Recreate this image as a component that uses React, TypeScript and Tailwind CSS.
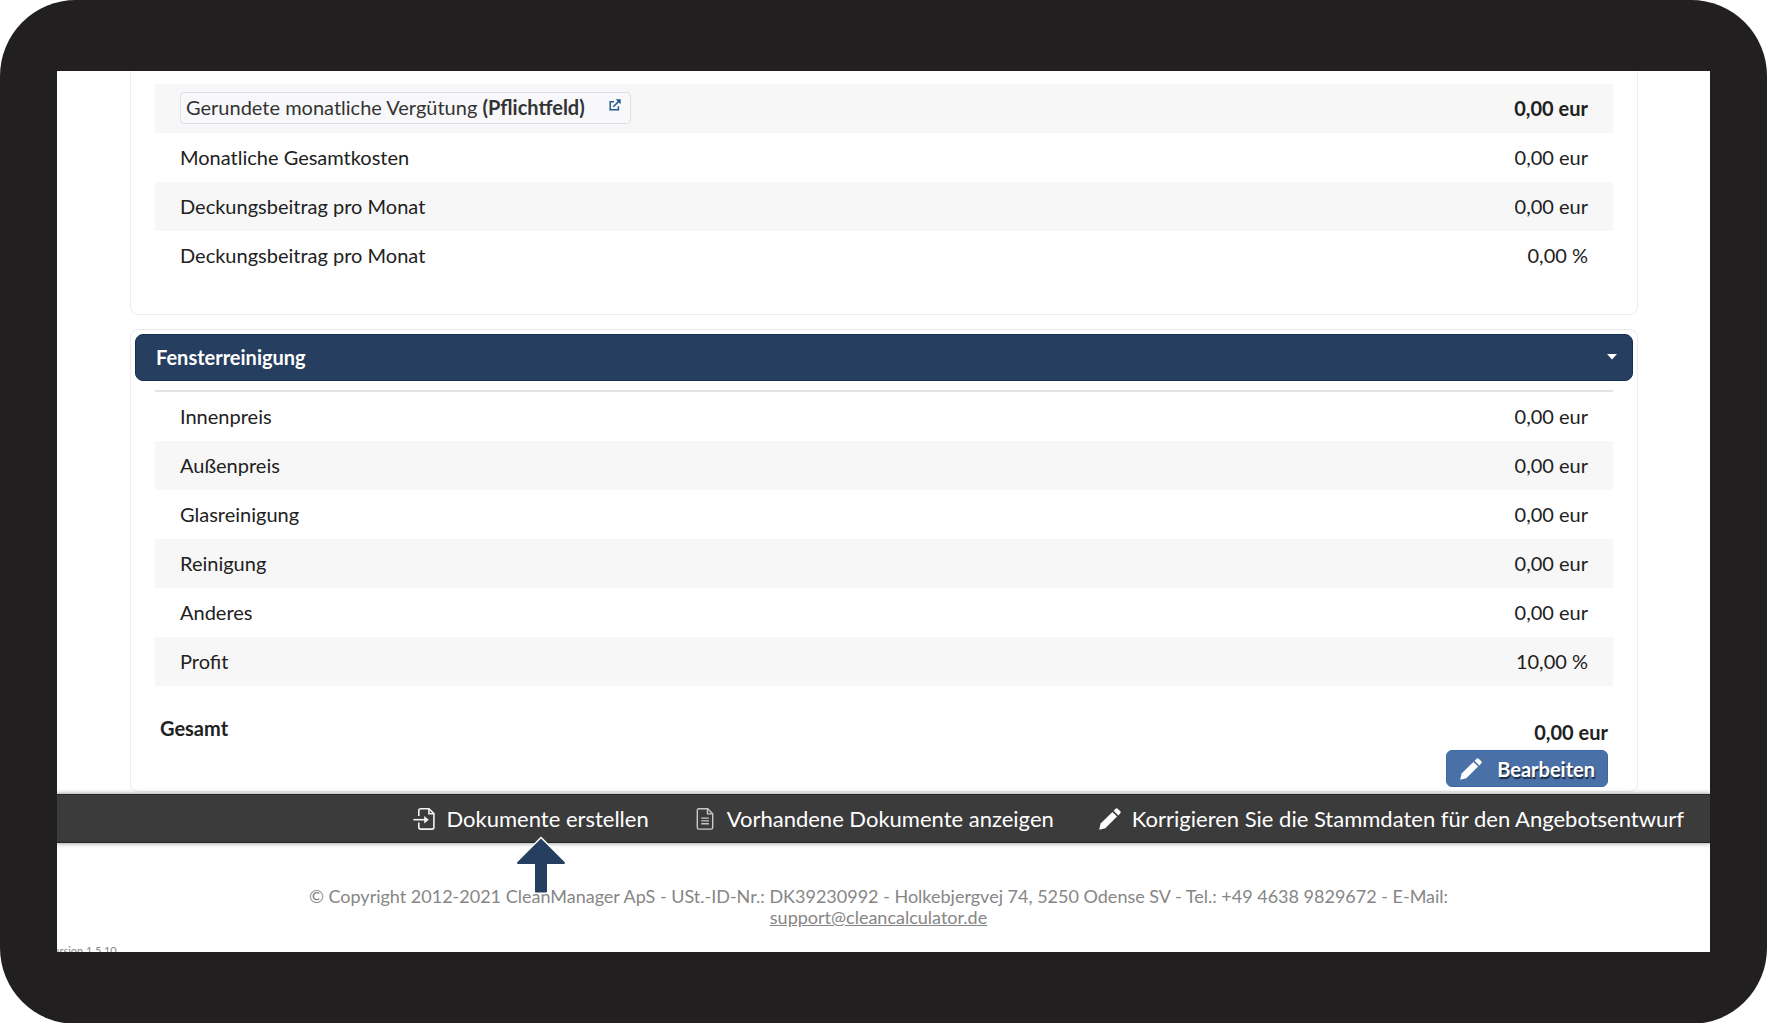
import type { ReactNode } from 'react';

interface PriceRow {
  label: ReactNode;
  value: string;
  bold?: boolean;
}

const monthlyRows: PriceRow[] = [
  { label: <RequiredLabel />, value: '0,00 eur', bold: true },
  { label: 'Monatliche Gesamtkosten', value: '0,00 eur' },
  { label: 'Deckungsbeitrag pro Monat', value: '0,00 eur' },
  { label: 'Deckungsbeitrag pro Monat', value: '0,00 %' },
];

const windowRows: PriceRow[] = [
  { label: 'Innenpreis', value: '0,00 eur' },
  { label: 'Außenpreis', value: '0,00 eur' },
  { label: 'Glasreinigung', value: '0,00 eur' },
  { label: 'Reinigung', value: '0,00 eur' },
  { label: 'Anderes', value: '0,00 eur' },
  { label: 'Profit', value: '10,00 %' },
];

function PencilIcon() {
  return (
    <svg viewBox="0 0 24 24" className="size-6 shrink-0" fill="#fff" aria-hidden="true">
      <path d="M1.2 22.8 2.6 16.6 14.4 4.9 19.1 9.6 7.3 21.3Z" />
      <path d="m15.6 3.7 1.8-1.8c.8-.8 1.7-.8 2.5 0l2.2 2.2c.8.8.8 1.7 0 2.5l-1.8 1.8Z" />
    </svg>
  );
}

function ImportIcon() {
  return (
    <svg viewBox="0 0 24 24" className="size-6 shrink-0" fill="none" stroke="#f2f2f2" strokeWidth="1.6" aria-hidden="true">
      <path d="M6.8 9V3.6c0-1.2.7-1.9 1.9-1.9h8.2l5 5v13.5c0 1.2-.7 1.9-1.9 1.9H8.7c-1.2 0-1.9-.7-1.9-1.9v-4.7" />
      <path d="M16.9 1.9v4.9h4.8" />
      <path d="M1.4 12.7h12" />
      <path d="m12.2 9 4.6 3.7-4.6 3.7Z" fill="#f2f2f2" stroke="none" />
    </svg>
  );
}

function DocumentIcon() {
  return (
    <svg viewBox="0 0 24 24" className="size-6 shrink-0" fill="none" stroke="#c9c9c9" strokeWidth="1.4" aria-hidden="true">
      <path d="M4.3 3.3c0-1 .6-1.6 1.6-1.6h8.8l5 5v13.8c0 1-.6 1.6-1.6 1.6H5.9c-1 0-1.6-.6-1.6-1.6Z" />
      <path d="M14.5 1.9v5h5" />
      <path d="M8.3 11.1h7.6M8.3 13.9h7.6M8.3 16.7h7.6" />
    </svg>
  );
}

function ExternalIcon() {
  return (
    <svg viewBox="0 0 12 12" className="size-3 shrink-0" fill="none" stroke="#1f5a94" strokeWidth="1.5" aria-hidden="true">
      <path d="M5 2.7H1.2v8.1h8.2V7.2" />
      <path d="M4.3 7.8 10 2.1" />
      <path d="M6.7.3h5v5Z" fill="#1f5a94" stroke="none" />
    </svg>
  );
}

function RequiredLabel() {
  return (
    <a
      href="#verguetung"
      className="inline-flex h-8 items-center rounded-sm border border-[#dedfea] bg-[#f8f8fa] px-[5px] pb-[2px] align-middle text-[#333]"
    >
      <span>
        Gerundete monatliche Vergütung <b>(Pflichtfeld)</b>
      </span>
      <span className="mb-1 ml-6 mr-1">
        <ExternalIcon />
      </span>
    </a>
  );
}

function PriceTable({ rows, stripe }: { rows: PriceRow[]; stripe: 'odd' | 'even' }) {
  return (
    <table className="w-full">
      <tbody className={stripe === 'odd' ? '[&>tr:nth-child(odd)]:bg-[#f7f7f7]' : '[&>tr:nth-child(even)]:bg-[#f7f7f7]'}>
        {rows.map((row, i) => (
          <tr key={i} className="h-[49px]">
            <th scope="row" className="pb-[2px] pl-[25px] text-left font-normal">
              {row.label}
            </th>
            <td className={row.bold ? 'pr-[25px] pb-[2px] text-right font-bold' : 'pr-[25px] pb-[2px] text-right'}>
              {row.value}
            </td>
          </tr>
        ))}
      </tbody>
    </table>
  );
}

export default function App() {
  return (
    <div className="flex min-h-screen flex-col rounded-[76px] bg-[#221f20] px-[57px] pt-[71px] pb-[72px] font-['Lato','Noto_Sans',sans-serif] text-xl text-[#212121]">
      <div className="flex-1 overflow-hidden bg-white">
        <main className="pr-[72px] pl-[73px]">
          <section className="rounded-b-lg border border-t-0 border-[#ececec] px-6 pt-[13px] pb-[34px]">
            <PriceTable rows={monthlyRows} stripe="odd" />
          </section>

          <section className="mt-[14px] rounded-lg border border-[#ececec] p-1">
            <button
              type="button"
              className="flex h-[47px] w-full items-center justify-between rounded-lg border border-[#142f54] bg-[#263e60] pr-[15px] pb-[2px] pl-5 font-bold text-white"
            >
              Fensterreinigung
              <svg viewBox="0 0 10 6" className="h-[6px] w-[10px]" fill="#fff" aria-hidden="true">
                <path d="M0 0h10L5 5.5Z" />
              </svg>
            </button>
            <div className="mx-5 mt-[9px] border-t-2 border-[#e2e2e2]">
              <PriceTable rows={windowRows} stripe="even" />
              <div className="flex justify-between px-[5px] pt-[30px] font-bold">
                <span className="leading-6">Gesamt</span>
                <div className="flex flex-col items-end pt-1">
                  <span className="leading-6">0,00 eur</span>
                  <button
                    type="button"
                    className="mt-[6px] flex h-[37px] items-center gap-[14px] rounded-md border border-[#3e68a5] bg-[#4a70a8] px-3 text-white [text-shadow:1px_2px_1px_#1c2b40]"
                  >
                    <PencilIcon />
                    Bearbeiten
                  </button>
                </div>
              </div>
            </div>
          </section>
        </main>

        <nav className="mt-[2px] flex h-[49px] items-center justify-end gap-[44px] border-y border-[#262626] bg-[#3b3b3b] pt-[2px] pr-[26px] text-[22px] text-white shadow-[0_0_4px_1px_#aaa]">
          <button type="button" className="relative flex items-center gap-[10px]">
            <ImportIcon />
            Dokumente erstellen
            <svg viewBox="0 0 54 60" className="absolute top-8 left-[102px] h-[60px] w-[54px]" aria-hidden="true">
              <path
                d="M27 2.500 50.500 26c1 1.200.4 2-.7 2H33v27.500c0 .7-.4 1-1 1H22c-.6 0-1-.3-1-1V28H4.200c-1.100 0-1.700-.8-.7-2Z"
                fill="#263e60"
                stroke="#fff"
                strokeWidth="3"
                paintOrder="stroke"
              />
            </svg>
          </button>
          <button type="button" className="flex items-center gap-[10px]">
            <DocumentIcon />
            Vorhandene Dokumente anzeigen
          </button>
          <button type="button" className="flex items-center gap-[10px]">
            <PencilIcon />
            Korrigieren Sie die Stammdaten für den Angebotsentwurf
          </button>
        </nav>

        <footer className="pt-[43px] text-[#868686]">
          <p className="pr-[10px] text-center text-lg leading-[21px]">
            © Copyright 2012-2021 CleanManager ApS - USt.-ID-Nr.: DK39230992 - Holkebjergvej 74, 5250 Odense SV - Tel.: +49 4638 9829672 - E-Mail:
            <br />
            <a href="mailto:support@cleancalculator.de" className="underline">
              support@cleancalculator.de
            </a>
          </p>
          <p className="mt-4 -ml-[10px] h-2 text-[11px] leading-[14px]">Version 1.5.10</p>
        </footer>
      </div>
    </div>
  );
}
